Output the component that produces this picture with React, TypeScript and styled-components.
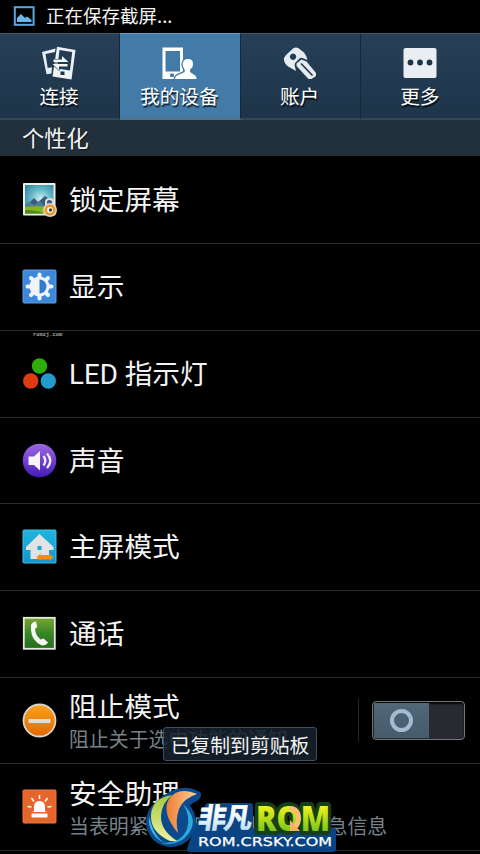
import type { ReactNode } from 'react';
import styled, { createGlobalStyle } from 'styled-components';

const GlobalStyle = createGlobalStyle`
  * {
    box-sizing: border-box;
  }

  body {
    margin: 0;
    background: #000;
    overflow: hidden;
    font-family: 'Noto Sans CJK SC', 'Noto Sans', sans-serif;
  }

  svg {
    display: block;
    flex: none;
  }
`;

const Screen = styled.div`
  position: relative;
  width: 480px;
  height: 854px;
  background: #000;
  color: #f4f4f4;
  overflow: hidden;
`;

const StatusBar = styled.header`
  height: 33px;
  padding: 0 0 1px 13px;
  display: flex;
  align-items: center;
  gap: 11px;
  font-size: 18.5px;
  white-space: nowrap;
`;

const StatusText = styled.span`
  height: 32px;
  line-height: 30px;
`;

const Tabs = styled.nav`
  display: flex;
  height: 87px;
`;

const Tab = styled.div<{ $active?: boolean }>`
  flex: 1;
  display: flex;
  flex-direction: column;
  align-items: center;
  padding: 12px 1px 0 0;
  border-top: 1px solid ${({ $active }) => ($active ? '#6c9cc3' : '#3f5668')};
  border-bottom: 2px solid ${({ $active }) => ($active ? '#54748e' : '#354858')};
  border-right: 1px solid #15273a;
  background: ${({ $active }) => ($active ? '#427aa8' : 'linear-gradient(#274057, #1d3449)')};

  &:last-child {
    border-right: 0;
  }
`;

const TabLabel = styled.span`
  margin-top: -1px;
  font-size: 19.7px;
  line-height: 30px;
  color: #fff;
  text-shadow: 1px 2px 1px rgba(0, 0, 0, 0.75);
`;

const SectionTitle = styled.h2`
  height: 36px;
  margin: 0;
  padding-left: 22px;
  background: #22303c;
  font-size: 22.3px;
  font-weight: 400;
  line-height: 35px;
  text-shadow: 1px 1px 1px rgba(0, 0, 0, 0.5);
`;

const List = styled.ul`
  margin: 0;
  padding: 1.6px 0 0;
  list-style: none;
`;

const Row = styled.li`
  display: flex;
  align-items: center;
  height: 86.7px;
  padding: 0 15px 1px 22px;
  border-bottom: 1px solid #2b2b2b;
`;

const RowText = styled.div`
  flex: 1;
  min-width: 0;
  margin-left: 12px;
  padding-top: 3px;
  white-space: nowrap;
`;

const Title = styled.div`
  font-family: Roboto, 'Noto Sans CJK SC', sans-serif;
  font-size: 27.7px;
  line-height: 36px;
`;

const Summary = styled.div`
  margin-top: -1px;
  font-size: 19.9px;
  line-height: 28px;
  color: #76828a;
`;

const SwitchWrap = styled.div`
  display: flex;
  align-items: center;
  height: 44px;
  padding-left: 13px;
  border-left: 1px solid #252525;
`;

const Track = styled.div`
  width: 93px;
  height: 39px;
  padding: 1px;
  border: 1px solid #747474;
  border-radius: 4px;
  background: #292a30;
  box-shadow: inset 0 2px 2px #050505;
`;

const Thumb = styled.div`
  width: 55px;
  height: 35px;
  display: flex;
  align-items: center;
  justify-content: center;
  background: linear-gradient(#526877, #455b6c);
`;

const Ring = styled.div`
  width: 23px;
  height: 23px;
  border: 4px solid #a2bdd3;
  border-radius: 50%;
`;

const Toast = styled.div`
  position: absolute;
  left: 163px;
  top: 727px;
  width: 154px;
  height: 34px;
  border: 1px solid #40505e;
  border-radius: 3px;
  background: rgba(22, 34, 46, 0.86);
  font-size: 19.8px;
  line-height: 33px;
  text-align: center;
  white-space: nowrap;
`;

const TinyMark = styled.span`
  position: absolute;
  left: 33px;
  top: 331px;
  font-family: 'Liberation Mono', monospace;
  font-size: 5.4px;
  font-weight: 700;
  line-height: 8px;
  color: #aaa;
`;

const Logo = styled.svg`
  position: absolute;
  left: 140px;
  top: 786px;
`;

const ScreenshotIcon = () => (
  <svg width="22" height="20" viewBox="0 0 22 20">
    <rect x="1.8" y="1.2" width="18.800" height="17.6" fill="none" stroke="#58a9dd" strokeWidth="2" />
    <path d="M4 16v-4l4-4 2.500 2.500L12 12l2-1.500 4.500 3.500v2z" fill="#67b9ed" />
  </svg>
);

const ConnectIcon = () => (
  <svg width="36" height="36" viewBox="0 0 36 36">
    <path fillRule="evenodd" d="M1 6 14.500 2.500l-.6 3.500L4.500 8l2.200 14 4.300-.7-.5 6.200-5 .8z" fill="#e9eef3" />
    <path
      fillRule="evenodd"
      d="m16 .8 18.500 3.200-4 29.500L11.500 30.500zM18.500 4 16.200 22.500l12.800 2L31.200 6z"
      fill="#edf2f6"
    />
    <rect x="19.500" y="25.500" width="4" height="3.500" fill="#1e3549" />
    <path
      d="M12.500 13.500h8.500v-3.500l6.500 6H12.500zM26.500 18h-15l6.500 6v-3.500h8.500z"
      fill="#f4f7f9"
      stroke="#21394e"
      strokeWidth="1.200"
      paintOrder="stroke"
    />
  </svg>
);

const DeviceIcon = () => (
  <svg width="36" height="36" viewBox="0 0 36 36">
    <path fillRule="evenodd" d="M1.500 1.500h20.500v31.500H1.500zM4.500 5v20.500h14.500V5z" fill="#fff" />
    <rect x="9" y="27.500" width="4" height="3.500" rx="1" fill="#427aa8" />
    <path
      d="M27 13c-4 0-5.500 2.500-5.300 6 .2 1.800.8 3 2 4.500v2.500L17 29c-2 .8-2.800 2-3 4h21.500c0-2-.5-3.200-2-4l-4.500-3v-2.500c2-1.500 3-3 3-5.500 0-3.500-1.500-5-5-5z"
      fill="#fff"
      stroke="#427aa8"
      strokeWidth="2.600"
      paintOrder="stroke"
    />
  </svg>
);

const KeyIcon = () => (
  <svg width="36" height="36" viewBox="0 0 36 36">
    <path
      fillRule="evenodd"
      d="M4 9 11 2.500q3-2 5.500-.2L22 6.500q2.500 3 3.500 7.500l-5-2q-2-1-3.500 1l-3 3q-2 1.500-1.200 4l1.200 5-7-4Q3 18.500 2 14.500 1.500 11.500 4 9zM11 7.500a3.200 3.200 0 1 0 .1 0z"
      fill="#e6ebf0"
    />
    <path d="m19.500 13.500 5 2L34 27v3l-4.500 3h-3L14.500 20v-2.500z" fill="#e6ebf0" />
    <path d="m19 17.500 11.500 12" stroke="#1e3549" strokeWidth="1.600" />
  </svg>
);

const MoreIcon = () => (
  <svg width="36" height="36" viewBox="0 0 36 36">
    <rect x="1.500" y="2" width="33" height="30" rx="2" fill="#e9eef3" />
    <circle cx="8.500" cy="16.500" r="2.900" fill="#1e3549" />
    <circle cx="18" cy="16.500" r="2.900" fill="#1e3549" />
    <circle cx="27.500" cy="16.500" r="2.900" fill="#1e3549" />
  </svg>
);

const LockScreenIcon = () => (
  <svg width="35" height="35" viewBox="0 0 35 35">
    <defs>
      <radialGradient id="sky" cx=".55" cy=".5" r=".65">
        <stop offset="0" stopColor="#d3f1f2" />
        <stop offset=".5" stopColor="#6cbccb" />
        <stop offset="1" stopColor="#35899f" />
      </radialGradient>
    </defs>
    <rect x="1" y="1" width="32.500" height="32.500" rx="1" fill="#eef0ec" />
    <rect x="3" y="3" width="28.500" height="28.500" fill="url(#sky)" />
    <path d="m3 23 5-3 4-4 4 4 7-6 8.500 6v8H3z" fill="#365c7b" />
    <path d="m3 22 5-2 4 3 6-4 5 6H3z" fill="#527f97" />
    <path d="M3 25q14-2 28.500 1v5.500H3z" fill="#86b61c" />
    <path d="M3 28q14 0 18 3.500H3z" fill="#4d8c16" />
    <path d="M24 23v-3q0-3 3.500-3t3.500 3v3" fill="none" stroke="#dadfe2" strokeWidth="2" />
    <circle cx="28" cy="28" r="7" fill="#d8d5cf" />
    <circle cx="28" cy="28" r="4.200" fill="#fff" stroke="#ee961f" strokeWidth="2.500" />
    <circle cx="28.500" cy="28" r="1.800" fill="#454545" />
  </svg>
);

const DisplayIcon = () => (
  <svg width="35" height="35" viewBox="0 0 35 35">
    <rect x="1" y="1" width="33" height="33" rx="1" fill="#3e88dc" stroke="#5c9de2" />
    <g stroke="#f0f4f8" strokeWidth="4" strokeLinecap="round">
      <path d="M17.500 5.500v24M5.500 17.500h24M9 9l17 17M26 9 9 26" />
    </g>
    <circle cx="17.500" cy="17.500" r="10" fill="#f0f4f8" />
    <path d="M17.500 10.500a7 7 0 0 1 0 14z" fill="#347bd0" />
  </svg>
);

const LedIcon = () => (
  <svg width="35" height="35" viewBox="0 0 35 35">
    <circle cx="17.500" cy="10" r="7.700" fill="#2fad0b" />
    <circle cx="8.700" cy="25" r="7.700" fill="#df3b12" />
    <circle cx="26.300" cy="25" r="7.700" fill="#249bcc" />
  </svg>
);

const SoundIcon = () => (
  <svg width="35" height="35" viewBox="0 0 35 35">
    <defs>
      <linearGradient id="violet" x2="0" y2="1">
        <stop offset="0" stopColor="#9b68df" />
        <stop offset=".5" stopColor="#7440d2" />
        <stop offset="1" stopColor="#431cb6" />
      </linearGradient>
    </defs>
    <circle cx="17.500" cy="17.500" r="16.800" fill="url(#violet)" />
    <path d="M6.500 13.500h5.500l6-5.500v19.500l-6-5.500H6.500z" fill="#f7f5fb" />
    <path d="M21.500 13q3.500 4.500 0 9.500M25 10.500q6.500 7 0 14.500" fill="none" stroke="#f2effa" strokeWidth="2.300" />
  </svg>
);

const HomeIcon = () => (
  <svg width="35" height="35" viewBox="0 0 35 35">
    <defs>
      <linearGradient id="cyan" x2="0" y2="1">
        <stop offset="0" stopColor="#20b5e0" />
        <stop offset="1" stopColor="#1594cf" />
      </linearGradient>
    </defs>
    <rect x="1" y="1" width="33" height="33" rx="1" fill="url(#cyan)" stroke="#45c2e7" />
    <path fillRule="evenodd" d="M17.500 5 31.500 18v3h-4.500V30H8.500v-9H4v-3zM15.500 17v4h4v-4z" fill="#e0e3e4" />
    <path d="m14.500 28.500 4-4V26h9v-1.500l4 4-4 3.500v-1.500h-9V32z" fill="#ee8c19" />
  </svg>
);

const CallIcon = () => (
  <svg width="35" height="35" viewBox="0 0 35 35">
    <defs>
      <linearGradient id="green" x2="0" y2="1">
        <stop offset="0" stopColor="#78a633" />
        <stop offset=".5" stopColor="#398626" />
        <stop offset="1" stopColor="#236e1d" />
      </linearGradient>
    </defs>
    <rect x="1.800" y="1.800" width="31" height="31" fill="url(#green)" stroke="#e4eadd" strokeWidth="1.800" />
    <path
      d="M9 9q1.500-3.500 5-3.500l1.200 5.500-2.200 2q.5 6.500 5.500 10.500l3-1 4.500 4q-1.500 3-6 3Q9.500 25 9 14z"
      fill="#f7f7f5"
    />
  </svg>
);

const BlockIcon = () => (
  <svg width="35" height="35" viewBox="0 0 35 35">
    <defs>
      <linearGradient id="amber" x2="0" y2="1">
        <stop offset="0" stopColor="#fba31b" />
        <stop offset="1" stopColor="#e06703" />
      </linearGradient>
    </defs>
    <circle cx="17.500" cy="17.500" r="16" fill="url(#amber)" stroke="#d8d4cb" strokeWidth="1.800" />
    <rect x="6.500" y="16" width="22" height="4" fill="#e0ddd6" />
  </svg>
);

const SirenIcon = () => (
  <svg width="35" height="35" viewBox="0 0 35 35">
    <rect x="1" y="1" width="33" height="33" rx="1" fill="#e5652a" stroke="#ea7a41" />
    <path d="M12 22v-4q0-6 5.500-6t5.500 6v4l1.500 1h-14z" fill="#fff" />
    <rect x="9.500" y="24.500" width="16" height="4" rx="1" fill="#fff" />
    <path d="M17.500 6v4M9.500 9l2.500 3.500M25.500 9 23 12.500M5.500 17.500l4 .5M29.500 17.500l-4 .5" stroke="#fff" strokeWidth="1.500" />
  </svg>
);

interface TabItem {
  label: string;
  icon: ReactNode;
  active?: boolean;
}

interface Setting {
  title: string;
  icon: ReactNode;
  summary?: string;
  hasSwitch?: boolean;
}

const tabs: TabItem[] = [
  { label: '连接', icon: <ConnectIcon /> },
  { label: '我的设备', icon: <DeviceIcon />, active: true },
  { label: '账户', icon: <KeyIcon /> },
  { label: '更多', icon: <MoreIcon /> },
];

const settings: Setting[] = [
  { title: '锁定屏幕', icon: <LockScreenIcon /> },
  { title: '显示', icon: <DisplayIcon /> },
  { title: 'LED 指示灯', icon: <LedIcon /> },
  { title: '声音', icon: <SoundIcon /> },
  { title: '主屏模式', icon: <HomeIcon /> },
  { title: '通话', icon: <CallIcon /> },
  { title: '阻止模式', icon: <BlockIcon />, summary: '阻止关于选中功能的通知', hasSwitch: true },
  { title: '安全助理', icon: <SirenIcon />, summary: '当表明紧急情况时，将发送紧急信息' },
];

const RomLogo = () => (
  <Logo width="200" height="68" viewBox="0 0 200 68">
    <defs>
      <linearGradient id="lime" x2="0" y2="1">
        <stop offset=".25" stopColor="#f2f21c" />
        <stop offset=".9" stopColor="#62bd18" />
      </linearGradient>
      <linearGradient id="ice" x2="0" y2="1">
        <stop offset=".4" stopColor="#fff" />
        <stop offset="1" stopColor="#a9d4f1" />
      </linearGradient>
      <linearGradient id="orange">
        <stop offset="0" stopColor="#ee7d35" />
        <stop offset="1" stopColor="#ffd095" />
      </linearGradient>
      <linearGradient id="leaf" x2="0" y2="1">
        <stop offset="0" stopColor="#a7c83c" />
        <stop offset="1" stopColor="#edf2a1" />
      </linearGradient>
    </defs>
    <path
      d="M68 20h42v25h83v18H50l8-22z"
      fill="#0a4484"
      stroke="#0a4484"
      strokeWidth="6"
      strokeLinejoin="round"
    />
    <circle cx="31" cy="36" r="25" fill="#0b4a8c" />
    <path d="M16 16Q38-6 60 6q4 6-7 11L37 30z" fill="#0b4a8c" />
    <path d="M43 18q16 15 6 29-10 14-27 10 20 0 25-14 4-13-4-25z" fill="#2babdc" />
    <path d="M9 30q-2 20 19 29Q14 53 9 30z" fill="#3bb8e3" />
    <path d="M32 9Q12 12 11 29q-1 17 19 26h7Q20 44 21 29q1-12 11-20z" fill="url(#leaf)" />
    <path d="M57 8Q38 0 29 13q-8 14 9 34Q35 34 39 23q5-11 18-15z" fill="url(#orange)" />
    <text
      x="116"
      y="45"
      fontFamily="Open Sans, sans-serif"
      fontSize="35"
      fontWeight="800"
      textLength="74"
      lengthAdjust="spacingAndGlyphs"
      fill="url(#lime)"
      stroke="#173f16"
      strokeWidth="8"
      strokeLinejoin="round"
      paintOrder="stroke"
    >
      ROM
    </text>
    <path d="M149 22.500q9.500 0 9.500 10 0 5-3.500 8.500" fill="none" stroke="#f8bf71" strokeWidth="5" />
    <path d="m150 34 10 11h-10z" fill="#f6b061" />
    <text
      y="42.500"
      x="63"
      fontFamily="Noto Sans CJK SC, sans-serif"
      fontSize="28"
      fontWeight="700"
      textLength="54"
      fill="url(#ice)"
      stroke="url(#ice)"
      strokeWidth=".7"
      transform="skewX(-8)"
    >
      非凡
    </text>
    <text
      x="58"
      y="59.500"
      fontFamily="DejaVu Sans, sans-serif"
      fontSize="12.500"
      textLength="134"
      lengthAdjust="spacingAndGlyphs"
      fill="#fff"
      stroke="#fff"
      strokeWidth=".25"
    >
      ROM.CRSKY.COM
    </text>
  </Logo>
);

const App = () => {
  return (
    <Screen>
      <GlobalStyle />
      <StatusBar>
        <ScreenshotIcon />
        <StatusText>正在保存截屏...</StatusText>
      </StatusBar>
      <Tabs>
        {tabs.map(({ label, icon, active }) => (
          <Tab key={label} $active={active}>
            {icon}
            <TabLabel>{label}</TabLabel>
          </Tab>
        ))}
      </Tabs>
      <SectionTitle>个性化</SectionTitle>
      <List>
        {settings.map(({ title, icon, summary, hasSwitch }) => (
          <Row key={title}>
            {icon}
            <RowText>
              <Title>{title}</Title>
              {summary && <Summary>{summary}</Summary>}
            </RowText>
            {hasSwitch && (
              <SwitchWrap>
                <Track>
                  <Thumb>
                    <Ring />
                  </Thumb>
                </Track>
              </SwitchWrap>
            )}
          </Row>
        ))}
      </List>
      <TinyMark>romzj.com</TinyMark>
      <Toast>已复制到剪贴板</Toast>
      <RomLogo />
    </Screen>
  );
};

export default App;
